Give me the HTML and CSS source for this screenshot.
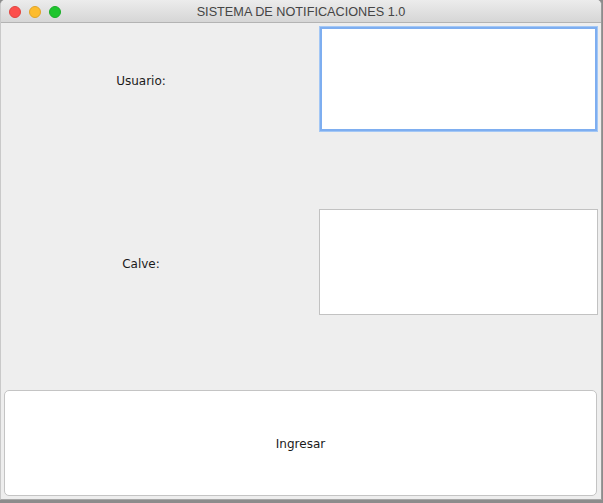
FILE: index.html
```html
<!DOCTYPE html>
<html lang="es">
<head>
<meta charset="utf-8">
<title>SISTEMA DE NOTIFICACIONES 1.0</title>
<link rel="stylesheet" href="styles.css">
</head>
<body>
<div class="window">
  <div class="titlebar">
    <div class="lights">
      <span class="light red"></span>
      <span class="light yellow"></span>
      <span class="light green"></span>
    </div>
    <div class="title">SISTEMA DE NOTIFICACIONES 1.0</div>
    <div class="spacer"></div>
  </div>
  <div class="content">
    <div class="row">
      <label class="label">Usuario:</label>
      <div class="field focused"></div>
    </div>
    <div class="row row-second">
      <label class="label">Calve:</label>
      <div class="field"></div>
    </div>
    <button class="btn">Ingresar</button>
  </div>
</div>
</body>
</html>
```

FILE: styles.css
```css
html, body {
  margin: 0;
  padding: 0;
}
body {
  width: 603px;
  height: 503px;
  background: #8c8c8c;
  overflow: hidden;
  font-family: "DejaVu Sans", "Liberation Sans", sans-serif;
  font-size: 12px;
  color: #1a1a1a;
}
.window {
  width: 602px;
  height: 500px;
  box-sizing: border-box;
  border-left: 1px solid #c9c9c9;
  border-right: 1px solid #9a9a9a;
  border-bottom: 1px solid #a8a8a8;
  border-radius: 5px 5px 0 0;
  background: #eeeeee;
  display: flex;
  flex-direction: column;
  overflow: hidden;
}
.titlebar {
  height: 22px;
  border-bottom: 1px solid #b3b3b3;
  background: linear-gradient(#ececec, #d6d6d6);
  display: grid;
  grid-template-columns: 1fr auto 1fr;
  align-items: center;
  flex-shrink: 0;
}
.lights {
  display: flex;
  gap: 8px;
  padding-left: 8px;
  padding-top: 1px;
}
.light {
  width: 12px;
  height: 12px;
  border-radius: 50%;
  box-sizing: border-box;
}
.red { background: #fc4f4c; border: 1px solid #e0443f; }
.yellow { background: #fdbc2e; border: 1px solid #e0a428; }
.green { background: #1ec52e; border: 1px solid #1aad28; }
.title {
  font-family: "Liberation Sans", Arial, sans-serif;
  font-size: 12.7px;
  color: #454545;
  padding-top: 1px;
}
.content {
  flex: 1;
  display: flex;
  flex-direction: column;
  padding: 3px 0 3px 0;
}
.row {
  display: flex;
  align-items: center;
  height: 106px;
}
.row-second {
  margin-top: 77px;
}
.label {
  width: 280px;
  text-align: center;
  padding-top: 4px;
}
.field {
  margin-left: 38px;
  width: 279px;
  height: 106px;
  box-sizing: border-box;
  background: #ffffff;
  border: 1px solid #c2c2c2;
}
.field.focused {
  border: 1px solid #a3c7f5;
  box-shadow: inset 0 0 0 2px #7eaef0;
}
.btn {
  margin: 75px 0 0 3px;
  width: 593px;
  height: 106px;
  box-sizing: border-box;
  background: #ffffff;
  border: 1px solid #c4c4c4;
  border-radius: 5px;
  font-family: "DejaVu Sans", "Liberation Sans", sans-serif;
  font-size: 12px;
  color: #1a1a1a;
  padding: 0;
  padding-top: 1px;
}
```
